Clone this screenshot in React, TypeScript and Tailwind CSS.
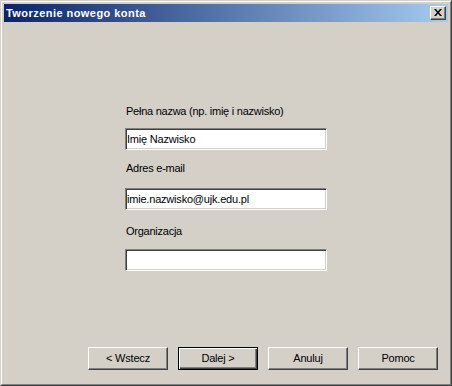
import { useState } from "react";

const FONT = "font-['Tahoma','Liberation_Sans','DejaVu_Sans',sans-serif]";

function Field({
  label,
  value,
  onChange,
  gapClass,
  className = "",
}: {
  label: string;
  value: string;
  onChange: (v: string) => void;
  gapClass: string;
  className?: string;
}) {
  return (
    <div className={"flex flex-col " + className}>
      <label className="h-[13px] pl-[1px] text-[11px] leading-[13px] tracking-[-0.25px] text-black">{label}</label>
      <input
        value={value}
        onChange={(event) => onChange(event.target.value)}
        className={
          gapClass +
          " h-[22px] w-[202px] border border-t-[#808080] border-l-[#808080] border-r-white border-b-white bg-white px-[1px] text-[11px] tracking-[-0.2px] text-black shadow-[inset_1px_1px_#404040,inset_-1px_-1px_#d4d0c8] outline-none"
        }
      />
    </div>
  );
}

function WizardButton({ children, isDefault = false }: { children: React.ReactNode; isDefault?: boolean }) {
  const base = "h-[23px] w-[80px] bg-[#d4d0c8] text-[11px] tracking-[-0.2px] text-black";
  if (isDefault) {
    return (
      <button className={base + " border border-black shadow-[inset_1px_1px_#fff,inset_-1px_-1px_#404040,inset_-2px_-2px_#808080]"}>
        {children}
      </button>
    );
  }
  return (
    <button className={base + " border border-t-white border-l-white border-r-[#404040] border-b-[#404040] shadow-[inset_-1px_-1px_#808080]"}>
      {children}
    </button>
  );
}

export default function App() {
  const [fullName, setFullName] = useState("Imię Nazwisko");
  const [email, setEmail] = useState("imie.nazwisko@ujk.edu.pl");
  const [org, setOrg] = useState("");

  return (
    <div className={"h-[386px] w-[452px] " + FONT}>
      <div className="h-full w-full border border-t-[#d4d0c8] border-l-[#d4d0c8] border-r-[#404040] border-b-[#404040] bg-[#d4d0c8]">
        <div className="flex h-full w-full flex-col border border-t-white border-l-white border-r-[#808080] border-b-[#808080] p-[2px]">
          {/* title bar */}
          <div className="flex h-[18px] items-center justify-between bg-[linear-gradient(to_right,#0a246a,#a6caf0)] pl-[2px] pr-[2px]">
            <span className="text-[11px] font-bold leading-[13px] tracking-[0.45px] text-white">Tworzenie nowego konta</span>
            <button className="flex h-[14px] w-[16px] items-center justify-center border border-t-white border-l-white border-r-[#404040] border-b-[#404040] bg-[#d4d0c8] shadow-[inset_-1px_-1px_#808080]">
              <svg width="8" height="7" viewBox="0 0 8 7" className="mb-[1px]">
                <path d="M0 0h2l2 2.5L6 0h2L5 3.5 8 7H6L4 4.5 2 7H0l3-3.5z" fill="#000" />
              </svg>
            </button>
          </div>

          {/* form */}
          <div className="flex flex-1 flex-col pl-[121px] pt-[83px]">
            <Field label="Pełna nazwa (np. imię i nazwisko)" value={fullName} onChange={setFullName} gapClass="mt-[10px]" />
            <Field label="Adres e-mail" value={email} onChange={setEmail} gapClass="mt-[13px]" className="mt-[12px]" />
            <Field label="Organizacja" value={org} onChange={setOrg} gapClass="mt-[11px]" className="mt-[15px]" />
          </div>

          {/* buttons */}
          <div className="mb-[12px] flex gap-[10px] pl-[84px]">
            <WizardButton>&lt; Wstecz</WizardButton>
            <WizardButton isDefault>Dalej &gt;</WizardButton>
            <WizardButton>Anuluj</WizardButton>
            <WizardButton>Pomoc</WizardButton>
          </div>
        </div>
      </div>
    </div>
  );
}
